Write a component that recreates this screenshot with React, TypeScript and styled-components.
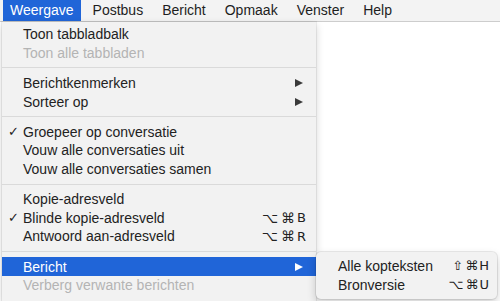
import React from 'react'
import styled, { createGlobalStyle, css } from 'styled-components'

const GlobalStyle = createGlobalStyle`
  body {
    margin: 0;
    background: #ffffff;
    font-family: "Liberation Sans", Arial, sans-serif;
    font-size: 14px;
    color: #222222;
  }
`

const BLUE = '#2065d8'

type Entry =
  | { kind: 'sep' }
  | {
      kind: 'item'
      label: string
      checked?: boolean
      disabled?: boolean
      shortcut?: string
      submenu?: boolean
      highlight?: boolean
    }

const titles = ['Weergave', 'Postbus', 'Bericht', 'Opmaak', 'Venster', 'Help']

const entries: Entry[] = [
  { kind: 'item', label: 'Toon tabbladbalk' },
  { kind: 'item', label: 'Toon alle tabbladen', disabled: true },
  { kind: 'sep' },
  { kind: 'item', label: 'Berichtkenmerken', submenu: true },
  { kind: 'item', label: 'Sorteer op', submenu: true },
  { kind: 'sep' },
  { kind: 'item', label: 'Groepeer op conversatie', checked: true },
  { kind: 'item', label: 'Vouw alle conversaties uit' },
  { kind: 'item', label: 'Vouw alle conversaties samen' },
  { kind: 'sep' },
  { kind: 'item', label: 'Kopie-adresveld' },
  { kind: 'item', label: 'Blinde kopie-adresveld', checked: true, shortcut: '⌥⌘B' },
  { kind: 'item', label: 'Antwoord aan-adresveld', shortcut: '⌥⌘R' },
  { kind: 'sep' },
  { kind: 'item', label: 'Bericht', submenu: true, highlight: true },
  { kind: 'item', label: 'Verberg verwante berichten', disabled: true },
]

const subEntries = [
  { label: 'Alle kopteksten', shortcut: '⇧⌘H' },
  { label: 'Bronversie', shortcut: '⌥⌘U' },
]

// modifiers get a bit of air, the key letter sits close to the last one
const Keys = ({ combo, wide }: { combo: string; wide?: boolean }) => {
  const mods = combo.slice(0, -1)
  const key = combo.slice(-1)
  return (
    <Shortcut $wide={wide}>
      {mods.split('').map((m, i) => (
        <Mod key={i} $wide={wide}>{m}</Mod>
      ))}
      <span>{key}</span>
    </Shortcut>
  )
}

const App = () => {
  return (
    <Screen>
      <GlobalStyle />
      <MenuBar>
        {titles.map((t, i) => (
          <MenuTitle key={t} $active={i === 0}>
            {t}
          </MenuTitle>
        ))}
      </MenuBar>
      <Desk>
        <Dropdown>
          {entries.map((e, i) =>
            e.kind === 'sep' ? (
              <Separator key={i} />
            ) : (
              <Item key={i} $disabled={e.disabled} $highlight={e.highlight}>
                <Check>{e.checked ? '✓' : ''}</Check>
                <Label>{e.label}</Label>
                {e.shortcut && <Keys combo={e.shortcut} wide />}
                {e.submenu && <Arrow $light={e.highlight} />}
                {e.highlight && (
                  <Submenu>
                    {subEntries.map((s) => (
                      <SubItem key={s.label}>
                        <Label>{s.label}</Label>
                        <Keys combo={s.shortcut} />
                      </SubItem>
                    ))}
                  </Submenu>
                )}
              </Item>
            )
          )}
        </Dropdown>
      </Desk>
    </Screen>
  )
}

const Screen = styled.div`
  width: 500px;
  height: 301px;
  overflow: hidden;
  display: flex;
  flex-direction: column;
`

const MenuBar = styled.div`
  height: 21px;
  flex-shrink: 0;
  display: flex;
  gap: 5px;
  padding-left: 3px;
  background: #f3f3f3;
  border-bottom: 1px solid #cdcdcd;
`

const MenuTitle = styled.div<{ $active?: boolean }>`
  display: flex;
  align-items: center;
  padding: 0 7px;
  line-height: 21px;
  color: #1e1e1e;
  ${({ $active }) =>
    $active &&
    css`
      background: ${BLUE};
      color: #ffffff;
    `}
`

const Desk = styled.div`
  flex: 1;
  display: flex;
  align-items: flex-start;
  padding-left: 2px;
  background: #ffffff;
`

const Dropdown = styled.div`
  width: 314px;
  padding-top: 3px;
  padding-bottom: 6px;
  background: #f2f2f2;
  box-shadow: 0 0 0 1px rgba(0, 0, 0, 0.06), 0 3px 8px rgba(0, 0, 0, 0.18);
`

const Item = styled.div<{ $disabled?: boolean; $highlight?: boolean }>`
  position: relative;
  height: 18.6px;
  display: flex;
  align-items: center;
  padding: 0 10px 0 6px;
  color: ${({ $disabled }) => ($disabled ? '#b4b4b4' : '#222222')};
  white-space: nowrap;
  ${({ $highlight }) =>
    $highlight &&
    css`
      background: ${BLUE};
      color: #ffffff;
    `}
`

const Check = styled.span`
  width: 15px;
  flex-shrink: 0;
  font-family: "DejaVu Sans", sans-serif;
  font-size: 13px;
`

const Label = styled.span`
  flex: 1;
`

const Shortcut = styled.span<{ $wide?: boolean }>`
  display: flex;
  align-items: center;
  gap: ${({ $wide }) => ($wide ? '2px' : '1px')};
  font-family: "DejaVu Sans", sans-serif;
  font-size: 13px;
`

const Mod = styled.span<{ $wide?: boolean }>`
  font-size: ${({ $wide }) => ($wide ? '14px' : '13px')};
  & + & {
    margin-left: ${({ $wide }) => ($wide ? '4px' : '1px')};
  }
`

const Arrow = styled.span<{ $light?: boolean }>`
  width: 0;
  height: 0;
  margin-right: 3px;
  border-top: 4.5px solid transparent;
  border-bottom: 4.5px solid transparent;
  border-left: 8px solid ${({ $light }) => ($light ? '#ffffff' : '#3a3a3a')};
`

const Separator = styled.div`
  height: 11.6px;
  display: flex;
  align-items: center;
  &::after {
    content: '';
    flex: 1;
    height: 1px;
    background: #dadada;
  }
`

const Submenu = styled.div`
  position: absolute;
  left: 100%;
  top: -5px;
  width: 181px;
  padding: 4px 0 5px;
  background: #f2f2f2;
  color: #222222;
  border-radius: 5px;
  box-shadow: 0 0 0 1px rgba(0, 0, 0, 0.08), 0 4px 10px rgba(0, 0, 0, 0.2);
`

const SubItem = styled.div`
  height: 19px;
  display: flex;
  align-items: center;
  padding: 0 8px 0 22px;
`

export default App
